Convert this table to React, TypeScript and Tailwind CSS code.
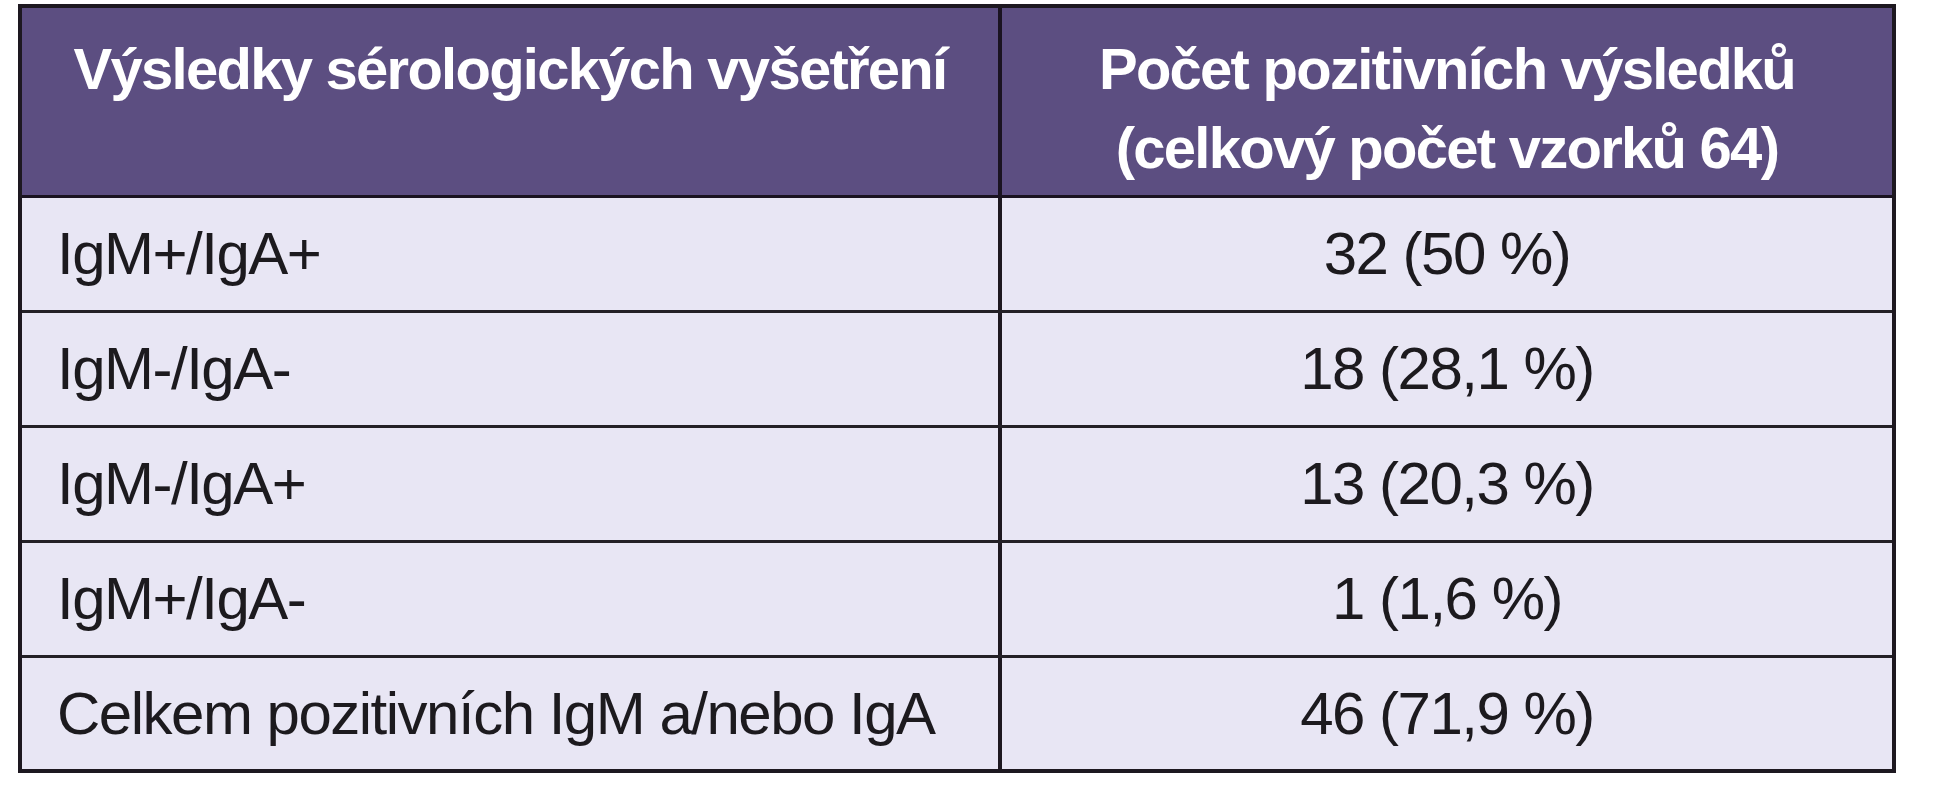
import React from "react";

const rows: [string, string][] = [
  ["IgM+/IgA+", "32 (50 %)"],
  ["IgM-/IgA-", "18 (28,1 %)"],
  ["IgM-/IgA+", "13 (20,3 %)"],
  ["IgM+/IgA-", "1 (1,6 %)"],
  ["Celkem pozitivních IgM a/nebo IgA", "46 (71,9 %)"],
];

export default function App() {
  return (
    <div className="w-[1936px] h-[800px] bg-white pl-[18px] pt-[4px] font-['Liberation_Sans',Arial,sans-serif]">
      <div className="w-[1878px] h-[769px] border-4 border-[#1d1820] flex flex-col">
        <div className="h-[190px] flex bg-[#5c4e81] border-b-[3px] border-[#1a1320] text-white font-bold text-[58px] leading-[79px] tracking-[-0.03em]">
          <div className="w-[980px] border-r-4 border-[#1a1320] pt-[21px] text-center">
            Výsledky sérologických vyšetření
          </div>
          <div className="flex-1 pt-[21px] text-center">
            <div>Počet pozitivních výsledků</div>
            <div>(celkový počet vzorků 64)</div>
          </div>
        </div>
        {rows.map(([a, b], i) => (
          <div
            key={i}
            className={
              i < rows.length - 1
                ? "h-[115px] flex bg-[#e8e6f4] border-b-[3px] border-[#232026] text-[#1c1a1e] text-[60px] tracking-[-0.025em]"
                : "flex-1 flex bg-[#e8e6f4] text-[#1c1a1e] text-[60px] tracking-[-0.025em]"
            }
          >
            <div className="w-[980px] border-r-4 border-[#1d1820] flex items-center pl-[35px]">
              {a}
            </div>
            <div className="flex-1 flex items-center justify-center">{b}</div>
          </div>
        ))}
      </div>
    </div>
  );
}
